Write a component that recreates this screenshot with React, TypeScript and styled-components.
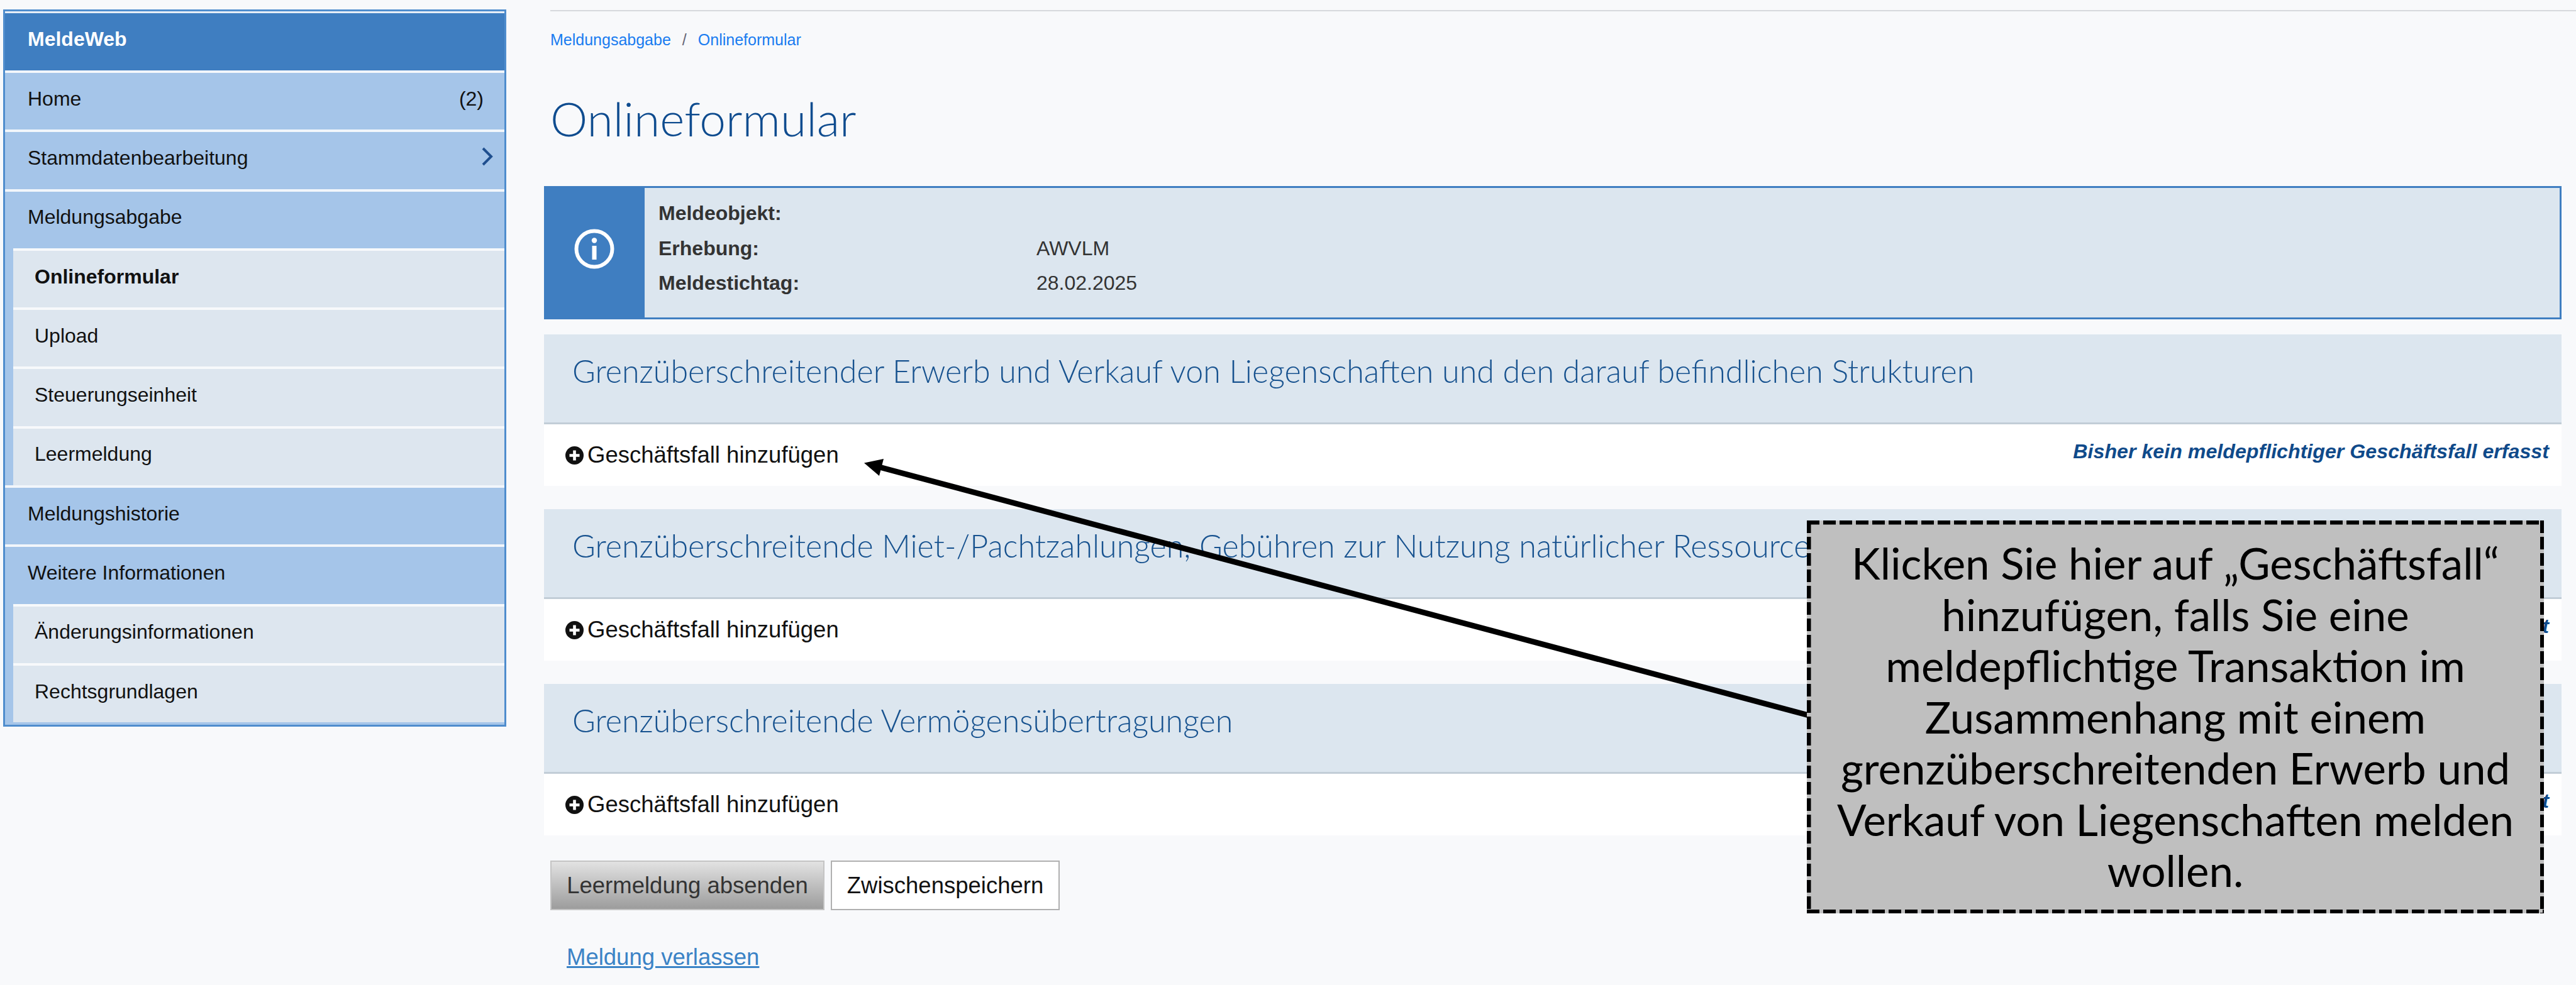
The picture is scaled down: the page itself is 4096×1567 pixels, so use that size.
import React from 'react';
import styled, { createGlobalStyle } from 'styled-components';

const GlobalStyle = createGlobalStyle`
  html, body {
    margin: 0;
    padding: 0;
    background: #f8f9fb;
  }
  * {
    box-sizing: border-box;
  }
`;

const Page = styled.div`
  position: relative;
  width: 4096px;
  height: 1567px;
  overflow: hidden;
  display: flex;
  align-items: flex-start;
  gap: 60px;
  padding: 15px 23px 0 5px;
  background: #f8f9fb;
  font-family: 'Liberation Sans', Arial, sans-serif;
  color: #111;
`;

const Sidebar = styled.nav`
  flex: 0 0 800px;
  display: flex;
  flex-direction: column;
  padding-bottom: 4px;
  border: 3px solid #4f8dcd;
  background: #a5c5e9;
`;

const SidebarHeader = styled.div`
  height: 94px;
  display: flex;
  align-items: center;
  padding: 0 0 8px 36px;
  border-top: 3px solid #e6eef7;
  background: #3f7ec1;
  color: #fff;
  font-size: 32px;
  font-weight: 700;
`;

const MenuRow = styled.div`
  height: 94.3px;
  display: flex;
  align-items: center;
  justify-content: space-between;
  padding: 0 33px 8px 36px;
  border-top: 4px solid #f2f6fb;
  font-size: 32px;
  color: #111;
`;

const SubRow = styled.div<{ $active?: boolean }>`
  height: 94.3px;
  margin-left: 13px;
  display: flex;
  align-items: center;
  padding: 0 0 8px 34px;
  border-top: 4px solid #f7f9fb;
  background: #dde6ef;
  font-size: 32px;
  font-weight: ${(p) => (p.$active ? 700 : 400)};
  color: #111;
`;

const Chevron = styled.svg`
  width: 20px;
  height: 30px;
  margin-right: -16px;
  margin-top: -4px;
`;

const Main = styled.main`
  flex: 1;
  min-width: 0;
  display: flex;
  flex-direction: column;
`;

const TopRule = styled.div`
  height: 2px;
  margin: 1px -23px 0 10px;
  background: #d6d9dd;
`;

const Breadcrumb = styled.div`
  display: flex;
  gap: 18px;
  margin: 30px 0 0 10px;
  font-size: 25px;
  line-height: 30px;
  color: #1a7cf0;
`;

const Crumb = styled.a`
  color: #1a7cf0;
`;

const Slash = styled.span`
  color: #667;
`;

const PageTitle = styled.h1`
  margin: 57px 0 55px 10px;
  height: 106px;
  font-family: 'Lato', sans-serif;
  font-weight: 300;
  font-size: 75px;
  line-height: 106px;
  color: #0f4c8f;
`;

const InfoBox = styled.section`
  display: flex;
  height: 212px;
  border: 3px solid #3f7ec1;
  background: #dce6ef;
`;

const InfoIconCell = styled.div`
  flex: 0 0 160px;
  display: flex;
  align-items: center;
  justify-content: center;
  margin: -3px 0 -3px -3px;
  padding-bottom: 12px;
  background: #3f7ec1;
`;

const InfoRows = styled.div`
  display: flex;
  flex-direction: column;
  padding: 13px 0 0 22px;
`;

const InfoRow = styled.div`
  display: grid;
  grid-template-columns: 601px auto;
  height: 55.5px;
  align-items: center;
  font-size: 32px;
  color: #333;
`;

const InfoLabel = styled.span`
  font-weight: 700;
`;

const Section = styled.section`
  margin-top: 37px;
`;

const FirstSection = styled(Section)`
  margin-top: 24px;
`;

const SectionHead = styled.div`
  height: 143px;
  display: flex;
  align-items: center;
  padding: 0 0 26px 45px;
  border-bottom: 3px solid #c2cdd7;
  background: #dce6ef;
`;

const SectionTitle = styled.h2`
  margin: 0;
  font-family: 'Lato', sans-serif;
  font-weight: 300;
  font-size: 50.2px;
  color: #17528f;
  white-space: nowrap;
`;

const SectionBody = styled.div`
  height: 98px;
  display: flex;
  align-items: center;
  justify-content: space-between;
  padding: 0 20px 0 34px;
  background: #fff;
`;

const AddLink = styled.a`
  display: flex;
  align-items: center;
  gap: 6px;
  font-size: 36.5px;
  color: #111;
`;

const StatusNote = styled.em`
  margin-top: -12px;
  font-size: 32.2px;
  font-weight: 700;
  color: #0f4a8a;
`;

const Actions = styled.div`
  display: flex;
  gap: 10px;
  margin: 40px 0 0 10px;
`;

const Button = styled.button<{ $primary?: boolean }>`
  height: 79px;
  padding: 0;
  font-family: inherit;
  font-size: 36.5px;
  border: 2px solid ${(p) => (p.$primary ? '#c4c4c4' : '#b0b0b0')};
  background: ${(p) =>
    p.$primary ? 'linear-gradient(#e2e2e2, #9c9c9c)' : '#fff'};
  color: ${(p) => (p.$primary ? '#333' : '#111')};
  width: ${(p) => (p.$primary ? '436px' : '364px')};
`;

const LeaveLink = styled.a`
  margin: 54px 0 0 36px;
  font-size: 36.5px;
  line-height: 42px;
  color: #3b83c6;
  text-decoration: underline;
`;

// annotation laid over the form
const ArrowLayer = styled.svg`
  position: absolute;
  top: 0;
  left: 0;
  pointer-events: none;
`;

const Callout = styled.aside`
  position: absolute;
  left: 2873px;
  top: 828px;
  width: 1172px;
  height: 625px;
  display: flex;
  align-items: center;
  justify-content: center;
  padding: 0 12px;
  background:
    repeating-linear-gradient(90deg, #000 0 20px, transparent 20px 26px) top / 100% 6.5px no-repeat,
    repeating-linear-gradient(90deg, #000 0 20px, transparent 20px 26px) bottom / 100% 6.5px no-repeat,
    repeating-linear-gradient(180deg, #000 0 20px, transparent 20px 26px) left / 6.5px 100% no-repeat,
    repeating-linear-gradient(180deg, #000 0 20px, transparent 20px 26px) right / 6.5px 100% no-repeat,
    #bfbfbf;
  font-family: 'Lato', sans-serif;
  font-size: 69px;
  line-height: 81.5px;
  text-align: center;
  color: #000;
`;

const InfoIcon = () => (
  <svg width="64" height="64" viewBox="0 0 64 64" fill="none">
    <circle cx="32" cy="32" r="28.5" stroke="#fff" strokeWidth="6" />
    <rect x="28.5" y="27" width="7" height="22" fill="#fff" />
    <circle cx="32" cy="18.5" r="4.2" fill="#fff" />
  </svg>
);

const PlusIcon = () => (
  <svg width="29" height="29" viewBox="0 0 29 29">
    <circle cx="14.5" cy="14.5" r="14.5" fill="#111" />
    <path d="M12.2 6.5h4.6v5.7h5.7v4.6h-5.7v5.7h-4.6v-5.7H6.5v-4.6h5.7z" fill="#fff" />
  </svg>
);

const sections = [
  'Grenzüberschreitender Erwerb und Verkauf von Liegenschaften und den darauf befindlichen Strukturen',
  'Grenzüberschreitende Miet-/Pachtzahlungen, Gebühren zur Nutzung natürlicher Ressourcen',
  'Grenzüberschreitende Vermögensübertragungen',
];

const FormSection = ({ title, first }: { title: string; first?: boolean }) => {
  const Wrap = first ? FirstSection : Section;
  return (
    <Wrap>
      <SectionHead>
        <SectionTitle>{title}</SectionTitle>
      </SectionHead>
      <SectionBody>
        <AddLink>
          <PlusIcon />
          Geschäftsfall hinzufügen
        </AddLink>
        <StatusNote>Bisher kein meldepflichtiger Geschäftsfall erfasst</StatusNote>
      </SectionBody>
    </Wrap>
  );
};

export default function App() {
  return (
    <>
      <GlobalStyle />
      <Page>
        <Sidebar>
          <SidebarHeader>MeldeWeb</SidebarHeader>
          <MenuRow>
            <span>Home</span>
            <span>(2)</span>
          </MenuRow>
          <MenuRow>
            <span>Stammdatenbearbeitung</span>
            <Chevron viewBox="0 0 20 30" fill="none">
              <path d="M3 2l13 13L3 28" stroke="#1f4f8f" strokeWidth="4" />
            </Chevron>
          </MenuRow>
          <MenuRow>Meldungsabgabe</MenuRow>
          <SubRow $active>Onlineformular</SubRow>
          <SubRow>Upload</SubRow>
          <SubRow>Steuerungseinheit</SubRow>
          <SubRow>Leermeldung</SubRow>
          <MenuRow>Meldungshistorie</MenuRow>
          <MenuRow>Weitere Informationen</MenuRow>
          <SubRow>Änderungsinformationen</SubRow>
          <SubRow>Rechtsgrundlagen</SubRow>
        </Sidebar>

        <Main>
          <TopRule />
          <Breadcrumb>
            <Crumb>Meldungsabgabe</Crumb>
            <Slash>/</Slash>
            <Crumb>Onlineformular</Crumb>
          </Breadcrumb>
          <PageTitle>Onlineformular</PageTitle>

          <InfoBox>
            <InfoIconCell>
              <InfoIcon />
            </InfoIconCell>
            <InfoRows>
              <InfoRow>
                <InfoLabel>Meldeobjekt:</InfoLabel>
              </InfoRow>
              <InfoRow>
                <InfoLabel>Erhebung:</InfoLabel>
                <span>AWVLM</span>
              </InfoRow>
              <InfoRow>
                <InfoLabel>Meldestichtag:</InfoLabel>
                <span>28.02.2025</span>
              </InfoRow>
            </InfoRows>
          </InfoBox>

          {sections.map((title, i) => (
            <FormSection key={title} title={title} first={i === 0} />
          ))}

          <Actions>
            <Button $primary>Leermeldung absenden</Button>
            <Button>Zwischenspeichern</Button>
          </Actions>
          <LeaveLink>Meldung verlassen</LeaveLink>
        </Main>

        <ArrowLayer width="4096" height="1567" viewBox="0 0 4096 1567">
          <line x1="2876" y1="1138" x2="1400" y2="743.5" stroke="#000" strokeWidth="9" />
          <path d="M1374 736.4L1405 730L1398 757z" fill="#000" />
        </ArrowLayer>

        <Callout>
          Klicken Sie hier auf „Geschäftsfall“ hinzufügen, falls Sie eine meldepflichtige
          Transaktion im Zusammenhang mit einem grenzüberschreitenden Erwerb und Verkauf von
          Liegenschaften melden wollen.
        </Callout>
      </Page>
    </>
  );
}
